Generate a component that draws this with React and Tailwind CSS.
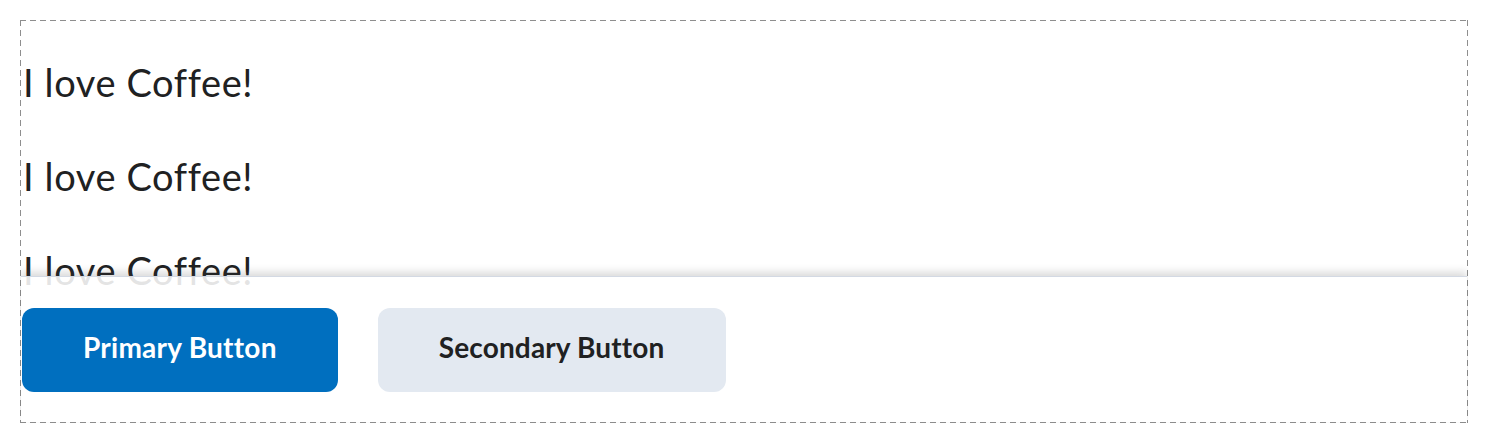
export default function App() {
  const lines = ['I love Coffee!', 'I love Coffee!', 'I love Coffee!', 'I love Coffee!']

  return (
    <div className="min-h-[444px] bg-white p-5 font-['Lato','Liberation_Sans',sans-serif] text-[#202122]">
      {/* dashed frame drawn as backgrounds to get the longer 6px dashes */}
      <div className="relative h-[403px] overflow-hidden bg-[repeating-linear-gradient(90deg,#8e8e8e_0_6px,transparent_6px_10px),repeating-linear-gradient(90deg,#8e8e8e_0_6px,transparent_6px_10px),repeating-linear-gradient(180deg,#8e8e8e_0_6px,transparent_6px_10px),repeating-linear-gradient(180deg,#8e8e8e_0_6px,transparent_6px_10px)] bg-[size:100%_1px,100%_1px,1px_100%,1px_100%] bg-[position:top_left,bottom_left,top_left,top_right] bg-no-repeat p-px">
        <div className="flex flex-col gap-[38px] pl-[2px] pt-[33px]">
          {lines.map((t, i) => (
            <p key={i} className="text-[38px] leading-[56px] tracking-[0.6px]">
              {t}
            </p>
          ))}
        </div>

        <div className="absolute inset-x-px bottom-px flex items-center border-t border-[#d3d9e3] bg-white/88 pb-[30px] pl-px pt-[31px] shadow-[0_-4px_8px_rgba(73,75,77,0.2)]">
          <button className="h-[84px] rounded-xl bg-[#006fbf] px-[61px] pb-[6px] text-[28px] font-bold leading-10 tracking-[0.25px] text-white">
            Primary Button
          </button>
          <button className="ml-10 h-[84px] rounded-xl bg-[#e3e9f1] px-[61px] pb-[6px] text-[28px] font-bold leading-10 tracking-[0.15px] text-[#202122]">
            Secondary Button
          </button>
        </div>
      </div>
    </div>
  )
}
